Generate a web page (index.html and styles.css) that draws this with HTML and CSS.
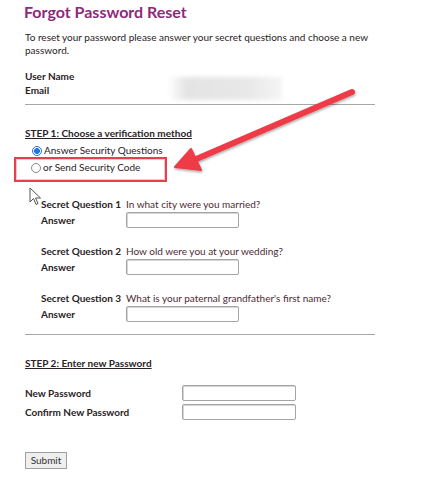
FILE: index.html
```html
<!DOCTYPE html>
<html>
<head>
<meta charset="utf-8">
<link rel="stylesheet" href="styles.css">
</head>
<body>
<div class="page">
  <h1 class="title">Forgot Password Reset</h1>
  <p class="intro">To reset your password please answer your secret questions and choose a new password.</p>
  <div class="info">
    <div class="info-labels">
      <div class="lbl">User Name</div>
      <div class="lbl">Email</div>
    </div>
    <div class="blur"></div>
  </div>
  <div class="rule"></div>

  <div class="step">STEP 1: Choose a verification method</div>
  <div class="radio-row first"><span class="radio checked"></span><span>Answer Security Questions</span></div>
  <div class="radio-row second"><span class="radio"></span><span>or Send Security Code</span></div>

  <div class="questions">
    <div class="qblock">
      <div class="qline"><span class="qlabel">Secret Question 1</span><span class="qtext">In what city were you married?</span></div>
      <div class="arow"><span class="qlabel">Answer</span><span class="field"></span></div>
    </div>
    <div class="qblock">
      <div class="qline"><span class="qlabel">Secret Question 2</span><span class="qtext">How old were you at your wedding?</span></div>
      <div class="arow"><span class="qlabel">Answer</span><span class="field"></span></div>
    </div>
    <div class="qblock">
      <div class="qline"><span class="qlabel">Secret Question 3</span><span class="qtext">What is your paternal grandfather's first name?</span></div>
      <div class="arow"><span class="qlabel">Answer</span><span class="field"></span></div>
    </div>
  </div>
  <div class="rule rule2"></div>

  <div class="step step2">STEP 2: Enter new Password</div>
  <div class="prow first"><span class="plabel">New Password</span><span class="field pfield"></span></div>
  <div class="prow"><span class="plabel">Confirm New Password</span><span class="field pfield"></span></div>

  <div class="btn">Submit</div>
</div>

<div class="callout"></div>
<svg class="arrow" width="447" height="479" viewBox="0 0 447 479">
  <defs>
    <filter id="sh" x="-10%" y="-10%" width="120%" height="130%">
      <feDropShadow dx="0.5" dy="1.5" stdDeviation="1.2" flood-color="#000" flood-opacity="0.35"/>
    </filter>
  </defs>
  <g filter="url(#sh)" fill="#ef3b47" stroke="#ef3b47">
    <line x1="352" y1="92" x2="194" y2="160" stroke-width="6" stroke-linecap="round"/>
    <polygon points="175,167 191,149 201,170" stroke-width="2" stroke-linejoin="round"/>
  </g>
</svg>
<svg class="cursor" width="14" height="20" viewBox="0 0 14 20">
  <path d="M1 1 L1 15 L4.5 11.5 L7 17.5 L9 16.6 L6.6 11 L11.5 11 Z" fill="#fff" stroke="#555" stroke-width="1" stroke-linejoin="round"/>
</svg>
</body>
</html>
```

FILE: styles.css
```css
html, body {
  margin: 0;
  padding: 0;
  background: #fff;
}
body {
  font-family: Lato, "Open Sans", sans-serif;
  font-size: 10px;
  color: #2a2226;
  width: 447px;
  height: 479px;
  position: relative;
  overflow: hidden;
}
.page {
  padding-left: 25px;
  width: 350px;
}
.title {
  margin: 0;
  height: 23px;
  line-height: 23px;
  font-size: 16px;
  font-weight: 700;
  color: #8c2a7c;
  margin-left: -1px;
}
.intro {
  margin: 8px 0 0;
  line-height: 12.5px;
  width: 345px;
}
.info {
  margin-top: 13px;
  display: flex;
  height: 28px;
}
.info-labels {
  width: 145px;
}
.lbl {
  font-weight: 700;
  line-height: 14px;
}
.blur {
  margin-top: 8px;
  width: 112px;
  height: 23px;
  background: linear-gradient(90deg, #fbfbfb 0%, #e4e4e4 15%, #e8e8e8 70%, #f5f5f5 100%);
  filter: blur(2px);
}
.rule {
  margin-top: 7px;
  border-top: 1px solid #a8a8a8;
  width: 350px;
}
.rule2 {
  margin-top: 12px;
}
.step {
  margin-top: 21px;
  line-height: 14px;
  font-weight: 700;
  text-decoration: underline;
}
.radio-row {
  display: flex;
  align-items: center;
  height: 17px;
  line-height: 17px;
  padding-left: 7px;
  gap: 2px;
}
.radio-row.first {
  margin-top: 2px;
}
.radio-row.second {
  padding-left: 6px;
}
.radio {
  width: 10px;
  height: 10px;
  border-radius: 50%;
  border: 1px solid #8a8a8a;
  background: #fdfdfd;
  box-sizing: border-box;
  flex: none;
}
.radio.checked {
  border-color: #2a6fd6;
  background: radial-gradient(circle, #1e74e8 0 2.6px, #fff 3.2px);
}
.questions {
  margin-top: 21px;
  padding-left: 16px;
  display: flex;
  flex-direction: column;
  gap: 16px;
}
.qline {
  display: flex;
  line-height: 14px;
  height: 14px;
}
.qlabel {
  width: 85px;
  flex: none;
  font-weight: 700;
  white-space: nowrap;
}
.qtext {
  color: #4e2a34;
  white-space: nowrap;
}
.arow {
  margin-top: 1px;
  display: flex;
  align-items: center;
  height: 16px;
}
.field {
  display: block;
  width: 113px;
  height: 16px;
  box-sizing: border-box;
  border: 1px solid #a4a4a4;
  border-radius: 2px;
  background: #fff;
  box-shadow: inset 1px 1px 0 #d6d6d6;
}
.step2 {
  margin-top: 21px;
}
.prow {
  display: flex;
  align-items: center;
  height: 16px;
  margin-top: 3px;
}
.prow.first {
  margin-top: 15px;
}
.plabel {
  width: 157px;
  flex: none;
  font-weight: 700;
}
.pfield {
  width: 114px;
}
.btn {
  margin-top: 32px;
  width: 42px;
  height: 17px;
  box-sizing: border-box;
  border: 1px solid #a0a0a0;
  background: #efefef;
  font-size: 10px;
  line-height: 15px;
  text-align: center;
  color: #333;
}
.callout {
  position: absolute;
  left: 14px;
  top: 157px;
  width: 153px;
  height: 25px;
  box-sizing: border-box;
  border: 2px solid #e5404d;
  box-shadow: inset 0 0 0 1px #f7c6cb;
}
.arrow {
  position: absolute;
  left: 0;
  top: 0;
  pointer-events: none;
}
.cursor {
  position: absolute;
  left: 29px;
  top: 187px;
}
```
